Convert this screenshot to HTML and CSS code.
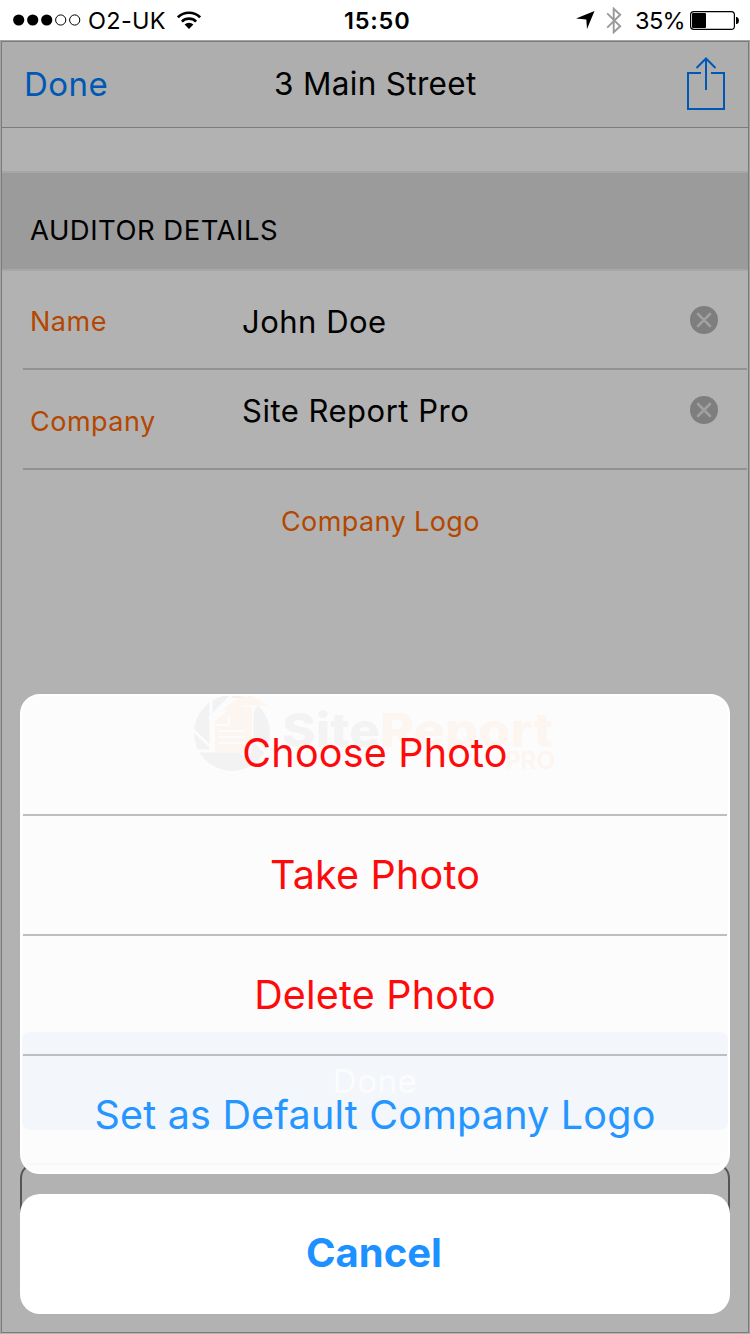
FILE: index.html
```html
<!DOCTYPE html>
<html lang="en">
<head>
<meta charset="utf-8">
<title>3 Main Street</title>
<link rel="stylesheet" href="styles.css">
</head>
<body>
<div class="phone">
  <div class="status">
    <svg class="signal" width="68" height="12" viewBox="0 0 68 12">
      <circle cx="5.7" cy="6" r="5.6"/><circle cx="19.7" cy="6" r="5.6"/><circle cx="33.7" cy="6" r="5.6"/>
      <g fill="none" stroke="#000" stroke-width="1"><circle cx="47.7" cy="6" r="5.1"/><circle cx="61.7" cy="6" r="5.1"/></g>
    </svg>
    <span class="carrier">O2-UK</span>
    <svg class="wifi" width="24" height="18" viewBox="0 0 24 18">
      <g fill="none" stroke="#000" stroke-width="2.7"><path d="M.9 6.3a15.8 15.8 0 0 1 22.2 0"/><path d="M4.9 10.6a10.2 10.2 0 0 1 14.2 0"/></g>
      <path d="M12 18l-4.4-4.5a6.3 6.3 0 0 1 8.8 0z"/>
    </svg>
    <span class="clock">15:50</span>
    <svg class="location" width="19" height="19" viewBox="0 0 19 19"><path d="M18.5 0L0 7.6l10.3.9L11 18z"/></svg>
    <svg class="bluetooth" width="16" height="27" viewBox="0 0 16 27"><path d="M1.2 6.3l13 13-6.5 6V1.7l6.5 6-13 13" fill="none" stroke="#999" stroke-width="1.9"/></svg>
    <span class="percent">35%</span>
    <svg class="battery" width="49" height="19" viewBox="0 0 49 19">
      <rect x=".6" y=".6" width="43.8" height="17.8" rx="3.2" fill="none" stroke="#000" stroke-width="1.2"/>
      <rect x="2" y="2" width="14" height="15" rx="1"/><path d="M46 6h1q2 1 2 3.5T47 13h-1z"/>
    </svg>
  </div>
  <div class="screen">
    <div class="nav">
      <span class="nav-done">Done</span>
      <span class="nav-title">3 Main Street</span>
      <svg class="share" width="38" height="54" viewBox="0 0 38 54"><g fill="none" stroke="#0058b5" stroke-width="2"><path d="M14 16H1v36h36V16H24"/><path d="M19 33V1.5M9.5 11L19 1.5 28.5 11"/></g></svg>
    </div>
    <div class="section"><span>AUDITOR DETAILS</span></div>
    <div class="row">
      <span class="label">Name</span><span class="value">John Doe</span>
      <svg class="clear" width="28" height="28" viewBox="0 0 28 28"><circle cx="14" cy="14" r="14"/><path d="M8 8l12 12M20 8L8 20"/></svg>
    </div>
    <div class="row company-row">
      <span class="label">Company</span><span class="value">Site Report Pro</span>
      <svg class="clear" width="28" height="28" viewBox="0 0 28 28"><circle cx="14" cy="14" r="14"/><path d="M8 8l12 12M20 8L8 20"/></svg>
    </div>
    <div class="logo-title"><span>Company Logo</span></div>
    <div class="outline"></div>
  </div>
  <div class="sheet">
    <div class="actions">
      <svg class="brand" width="370" height="80" viewBox="190 693 370 80">
        <circle cx="232" cy="733" r="38" fill="#f2f2f2"/>
        <path d="M211 717L230 698H262L252 715V750H211z" fill="#fcfcfc"/>
        <path d="M211 698V750M209 719L233 694M192 729L213 749M192 751H244M240 751L258 769M252 712V738L270 757" fill="none" stroke="#fcfcfc" stroke-width="3"/>
        <path d="M215 721l17-14h20v46h-37z" fill="#fdf5f0"/>
        <path d="M222 711q12-13 25-14l3-3 18 12h-8q-12-3-25 3z" fill="#fdf5f0"/>
        <path d="M216 725h13v-9M218 731h27M218 737h27M218 743h27" fill="none" stroke="#fcfcfc" stroke-width="2.5"/>
        <text x="282" y="747" class="brand-name" fill="#f3f3f3" textLength="98" lengthAdjust="spacingAndGlyphs">Site</text>
        <text x="380" y="747" class="brand-name" fill="#fdf5f0" textLength="173" lengthAdjust="spacingAndGlyphs">Report</text>
        <text x="505" y="768.5" class="brand-pro" fill="#fdf5f0" textLength="50" lengthAdjust="spacingAndGlyphs">PRO</text>
      </svg>
      <div class="ghost-button"><span>Done</span></div>
      <div class="ghost-line"></div>
      <div class="action first"><span>Choose Photo</span></div>
      <div class="action"><span>Take Photo</span></div>
      <div class="action"><span>Delete Photo</span></div>
      <div class="action blue"><span>Set as Default Company Logo</span></div>
    </div>
    <div class="cancel"><span>Cancel</span></div>
  </div>
</div>
</body>
</html>
```
FILE: styles.css
```css
* { box-sizing: border-box; }
body { margin: 0; background: #fff; }
.phone { position: relative; width: 750px; height: 1334px; overflow: hidden; font-family: Inter, "Liberation Sans", sans-serif; color: #000; white-space: nowrap; display: flex; flex-direction: column; }
.status { height: 40px; display: flex; align-items: center; padding-left: 13px; font-size: 23.5px; line-height: 40px; flex: none; }
.status svg { flex: none; }
.status span { padding-top: 2px; }
.carrier { width: 78px; margin-left: 7px; letter-spacing: .3px; }
.wifi { margin-left: 11px; }
.clock { margin-left: 143px; width: 67px; font-weight: 600; letter-spacing: .8px; }
.location { margin-left: 165px; }
.bluetooth { margin-left: 11px; }
.percent { margin-left: 13px; width: 50px; letter-spacing: -.6px; }
.battery { margin-left: 5px; }
.screen { flex: 1; background: #b2b2b2; border: 1px solid #a3a3a3; border-bottom-color: #b2b2b2; outline: 1px solid #7b7b7b; outline-offset: -2px; display: flex; flex-direction: column; }
.nav { height: 87px; flex: none; background: #aeaeae; border-bottom: 1px solid #8a8a8a; display: flex; align-items: flex-start; padding: 16px 24px 0 23px; line-height: 54px; outline: 1px solid #7b7b7b; outline-offset: -1px; }
.nav-done { color: #0058b5; font-size: 33px; width: 250px; letter-spacing: .5px; }
.nav-title { font-size: 31.5px; flex: 1; letter-spacing: .32px; }
.section { margin-top: 43px; height: 100px; flex: none; background: #9b9b9b; border: solid #a6a6a6; border-width: 2px 0; padding: 37px 0 0 29px; font-size: 27.5px; line-height: 40px; letter-spacing: .48px; }
.row { height: 99px; flex: none; border-bottom: 2px solid #929292; margin: 0 2px 0 22px; padding-left: 7px; display: flex; align-items: center; }
.row .label { padding-top: 4px; }
.row .value { padding-top: 3px; }
.company-row { height: 100px; }
.company-row .value { margin-bottom: 20px; }
.company-row .clear { margin-bottom: 18px; }
.label { color: #b34700; font-size: 27px; width: 212px; letter-spacing: .5px; }
.value { font-size: 31px; flex: 1; letter-spacing: .5px; }
.clear { margin-right: 29px; fill: #7e7e7e; stroke: #a0a0a0; stroke-width: 2.6; stroke-linecap: round; }
.clear circle { stroke: none; }
.logo-title { color: #b34700; padding: 32px 0 0 280px; font-size: 27px; line-height: 40px; letter-spacing: .4px; }
.outline { position: absolute; left: 20px; top: 1163px; width: 710px; height: 100px; border: 2px solid #555; border-radius: 15px; }
.sheet { position: absolute; left: 20px; top: 694px; width: 710px; display: flex; flex-direction: column; gap: 20px; }
.actions { position: relative; height: 480px; border-radius: 20px; background: #fcfcfc; border: 2px solid #fff; overflow: hidden; }
.action { position: relative; height: 120px; margin: 0 1px; padding-bottom: 1px; border-bottom: 2px solid #bebec0; display: flex; justify-content: center; align-items: center; font-size: 39.5px; color: #ff0a0a; letter-spacing: .2px; }
.action.first { padding-bottom: 5px; }
.action.blue { border: 0; padding-bottom: 3px; color: #2595ff; }
.brand { position: absolute; left: 168px; top: -3px; }
.brand-name { font: 800 47px Inter, sans-serif; }
.brand-pro { font: 600 24px Inter, sans-serif; }
.ghost-button { position: absolute; left: 0; top: 336px; width: 706px; height: 98px; border-radius: 8px; background: #f3f6fb; color: #fcfcfc; text-align: center; font-size: 33px; line-height: 98px; letter-spacing: .5px; }
.ghost-line { position: absolute; left: 8px; top: 467px; width: 690px; height: 2px; background: #f7f7f7; }
.cancel { height: 120px; padding: 0 2px 3px 0; border-radius: 20px; background: #fff; color: #1d91ff; font-size: 40px; font-weight: 700; display: flex; align-items: center; justify-content: center; }
```
